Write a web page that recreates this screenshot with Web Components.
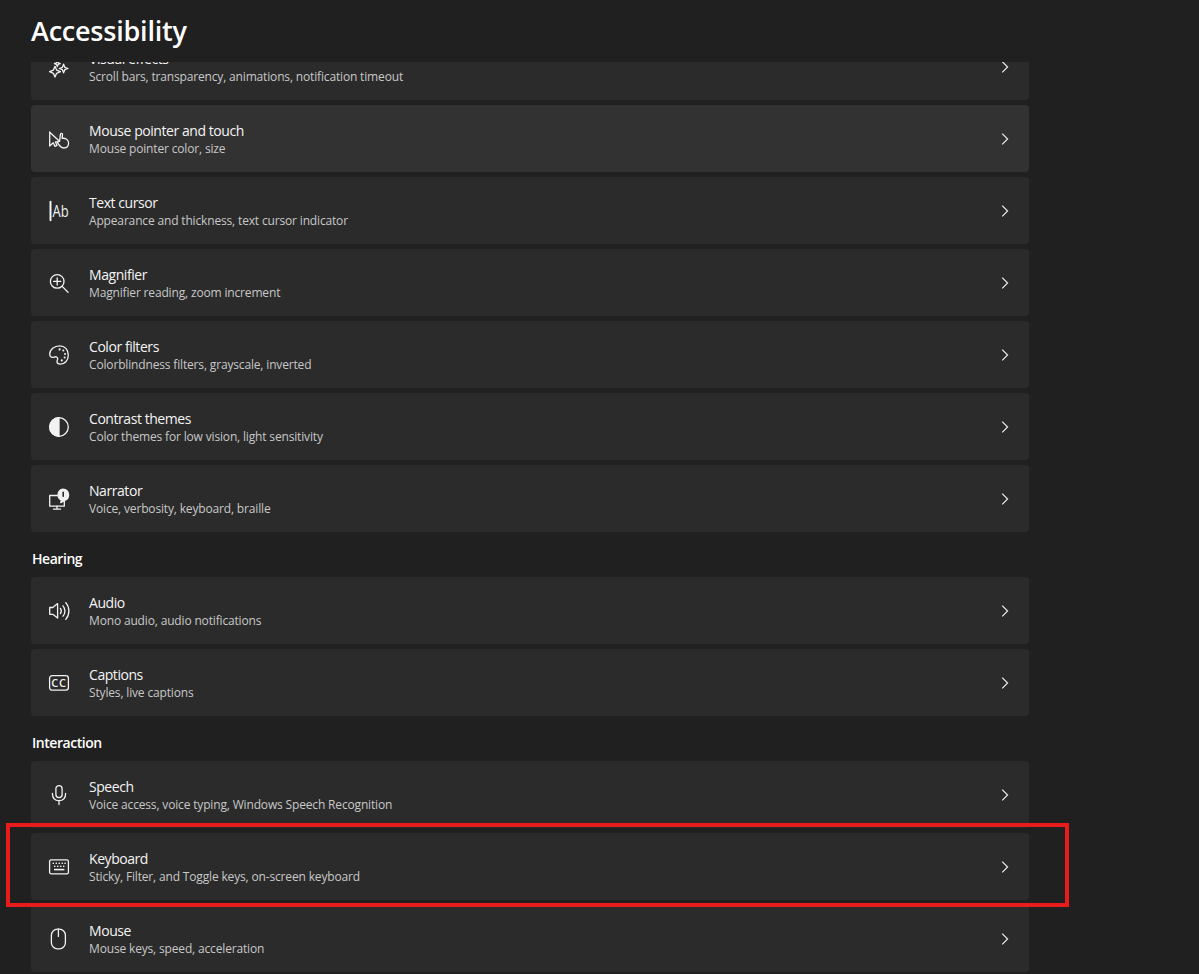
<!DOCTYPE html>
<html lang="en"><head><meta charset="utf-8"><title>Accessibility</title>
<style>
html,body{margin:0;padding:0;background:#202020}
body{font-family:"Open Sans","Noto Sans",sans-serif;color:#fff}
</style></head><body>
<settings-page>
  <span slot="title">Accessibility</span>
  <setting-row icon="sparkle" heading="Visual effects" sub="Scroll bars, transparency, animations, notification timeout"></setting-row>
  <setting-row icon="pointer" heading="Mouse pointer and touch" sub="Mouse pointer color, size" hover></setting-row>
  <setting-row icon="cursor" heading="Text cursor" sub="Appearance and thickness, text cursor indicator"></setting-row>
  <setting-row icon="magnifier" heading="Magnifier" sub="Magnifier reading, zoom increment"></setting-row>
  <setting-row icon="palette" heading="Color filters" sub="Colorblindness filters, grayscale, inverted"></setting-row>
  <setting-row icon="contrast" heading="Contrast themes" sub="Color themes for low vision, light sensitivity"></setting-row>
  <setting-row icon="narrator" heading="Narrator" sub="Voice, verbosity, keyboard, braille"></setting-row>
  <section-label>Hearing</section-label>
  <setting-row icon="audio" heading="Audio" sub="Mono audio, audio notifications"></setting-row>
  <setting-row icon="captions" heading="Captions" sub="Styles, live captions"></setting-row>
  <section-label>Interaction</section-label>
  <setting-row icon="mic" heading="Speech" sub="Voice access, voice typing, Windows Speech Recognition"></setting-row>
  <setting-row icon="keyboard" heading="Keyboard" sub="Sticky, Filter, and Toggle keys, on-screen keyboard"></setting-row>
  <setting-row icon="mouse" heading="Mouse" sub="Mouse keys, speed, acceleration"></setting-row>
  <highlight-box slot="overlay"></highlight-box>
</settings-page>
<script>
const ICONS={
sparkle:'<path d="M6 9.3 7.6 13.1 11.4 14.7 7.6 16.3 6 20.1 4.4 16.3.6 14.7 4.4 13.1Z"/><path d="M14.6 7.2 15.8 10.3 19 11.5 15.8 12.7 14.6 15.8 13.4 12.7 10.2 11.5 13.4 10.3Z"/><path d="M8.3 3.8 9.1 5.9 11.2 6.7 9.1 7.5 8.3 9.6 7.5 7.5 5.4 6.7 7.5 5.9Z"/>',
pointer:'<path d="M.7 3.2V17L4.2 13.8 6 17.4 8 16.4 6.4 12.8H9.2"/><path d="M.7 3.2 9.4 11.2"/><path d="M8.4 13.4 9.7 11.6 10.6 12.4 11.4 5.4C11.6 4 13.6 4.2 13.5 5.6L13.1 9.4C15.5 8.8 19.6 10 19.6 14 19.6 17.2 17.5 19 14.8 19 11.9 19 10.9 17.2 8.4 13.4Z"/>',
cursor:'<path d="M1.5 .8V19.2" stroke-width="2"/><text transform="translate(3.6 15.6) scale(.84 1)" font-family="Open Sans" font-size="15.5" fill="currentColor" stroke="none">Ab</text>',
magnifier:'<circle cx="8.2" cy="8.4" r="6.8"/><path d="M8.2 4.8V12M4.6 8.4H11.8M13.2 13.4 19 19.2"/>',
palette:'<path d="M10.7.8C15.7.8 19.3 4.7 19.3 9.9 19.3 15.6 15.4 19.2 11.3 19.2 9.3 19.2 8 18.2 8 16.6 8 15 9 14.6 8.6 13.2 8.2 11.7 6.7 11.4 5.2 12.1 3 13.1.7 11.8.7 9.2.7 4.5 5.3.8 10.7.8Z"/><g fill="currentColor" stroke="none"><circle cx="10.6" cy="4.4" r="1.1"/><circle cx="14.3" cy="5.6" r="1"/><circle cx="16" cy="9" r="1"/><circle cx="15.6" cy="12.6" r="1"/><circle cx="12.8" cy="15.4" r="1.1"/></g>',
contrast:'<circle cx="10" cy="10" r="9.3"/><path d="M10 .7A9.3 9.3 0 0 0 10 19.3Z" fill="currentColor"/>',
narrator:'<path d="M8.6 6.5H.7V17.2H15.3V12.5"/><path d="M4.5 20.2H11.5M8 17.2V20.2"/><path d="M14 .2A5.8 5.8 0 0 1 15.6 11.5L11.8 13.6 12.4 11.2A5.8 5.8 0 0 1 14 .2Z" fill="currentColor"/><path d="M14.2 3.4V7.2" stroke="#2b2b2b" stroke-width="1.6"/>',
audio:'<path d="M.7 6.5H3.8L8.6 2.6V17L3.8 13.3H.7Z"/><path d="M11.4 7.4A4.5 4.5 0 0 1 11.4 12.6M14 4.8A8 8 0 0 1 14 15.2M16.8 1.6A13 13 0 0 1 16.8 18.4"/>',
captions:'<rect x=".6" y="2.6" width="18.8" height="14.6" rx="2.6"/><text x="10" y="14" text-anchor="middle" font-family="Open Sans" font-size="11" font-weight="600" letter-spacing=".8" fill="currentColor" stroke="none">CC</text>',
mic:'<rect x="6.9" y=".6" width="6.2" height="12" rx="3.1"/><path d="M3.4 8.4C3.4 12.9 6 15.6 10 15.6S16.6 12.9 16.6 8.4M10 15.6V19.6"/>',
keyboard:'<rect x=".6" y="2.8" width="18.8" height="14" rx="1.6"/><g fill="currentColor" stroke="none"><rect x="3.6" y="5.6" width="1.4" height="1.4"/><rect x="6.6" y="5.6" width="1.4" height="1.4"/><rect x="9.6" y="5.6" width="1.4" height="1.4"/><rect x="12.6" y="5.6" width="1.4" height="1.4"/><rect x="15.4" y="5.6" width="1.4" height="1.4"/><rect x="5" y="8.6" width="1.4" height="1.4"/><rect x="8" y="8.6" width="1.4" height="1.4"/><rect x="11" y="8.6" width="1.4" height="1.4"/><rect x="14" y="8.6" width="1.4" height="1.4"/><rect x="5" y="11.8" width="10.4" height="1.6"/></g>',
mouse:'<rect x="2.4" y=".2" width="14" height="19.6" rx="6"/><path d="M9.4 .2V7.4"/>'
};
function def(name,css,html){
  customElements.define(name,class extends HTMLElement{
    constructor(){super();this.attachShadow({mode:'open'});}
    connectedCallback(){this.shadowRoot.innerHTML='<style>'+css+'</style>'+(typeof html==='function'?html(this):html);}
  });
}
def('settings-page',`
  :host{display:flex;flex-direction:column;position:relative;width:1199px;height:974px;overflow:hidden;background:#202020}
  header{flex:none;height:62px;box-sizing:border-box;padding:12px 0 0 31px;font-size:27px;line-height:38px;font-weight:600;color:#fff;letter-spacing:-.22px}
  main{flex:1;min-height:0;overflow:hidden;padding:0 170px 0 31px}
  .list{display:flex;flex-direction:column;gap:5px;margin-top:-29px}
`,`<header><slot name="title"></slot></header><main><div class="list"><slot></slot></div></main><slot name="overlay"></slot>`);
def('section-label',`
  :host{display:block;height:35px;box-sizing:border-box;padding:12px 0 0 1px;font-size:14px;line-height:20px;font-weight:600;color:#fff;letter-spacing:-.45px}
`,`<slot></slot>`);
def('highlight-box',`
  :host{display:block;position:absolute;left:6px;top:823px;width:1063px;height:84px;box-sizing:border-box;border:4px solid #e81c1c;pointer-events:none}
`,``);
def('setting-row',`
  :host{display:flex;align-items:center;height:67px;flex:none;box-sizing:border-box;background:#2b2b2b;border-radius:4px;padding:0 16px 0 18px;color:#f2f2f2}
  :host([hover]){background:#323232}
  .icon{flex:none;width:20px;height:20px;overflow:visible;fill:none;stroke:currentColor;stroke-width:1.3;stroke-linejoin:round;stroke-linecap:round}
  .text{flex:1;min-width:0;margin-left:20px;padding-top:2px;display:flex;flex-direction:column}
  .h{font-size:14px;line-height:18px;color:#f4f4f4;letter-spacing:-.44px}
  .s{font-size:12px;line-height:18px;color:#c8c8c8;letter-spacing:-.16px;position:relative;top:.5px}
  .chev{flex:none;width:8px;height:12px;margin-right:4px;fill:none;stroke:#e6e6e6;stroke-width:1.25}
`,el=>`<svg class="icon" viewBox="0 0 20 20">${ICONS[el.getAttribute('icon')]||''}</svg>
  <div class="text"><div class="h">${el.getAttribute('heading')}</div><div class="s">${el.getAttribute('sub')}</div></div>
  <svg class="chev" viewBox="0 0 8 12"><path d="M1.2 .6 6.6 6 1.2 11.4"/></svg>`);
</script>
</body></html>
